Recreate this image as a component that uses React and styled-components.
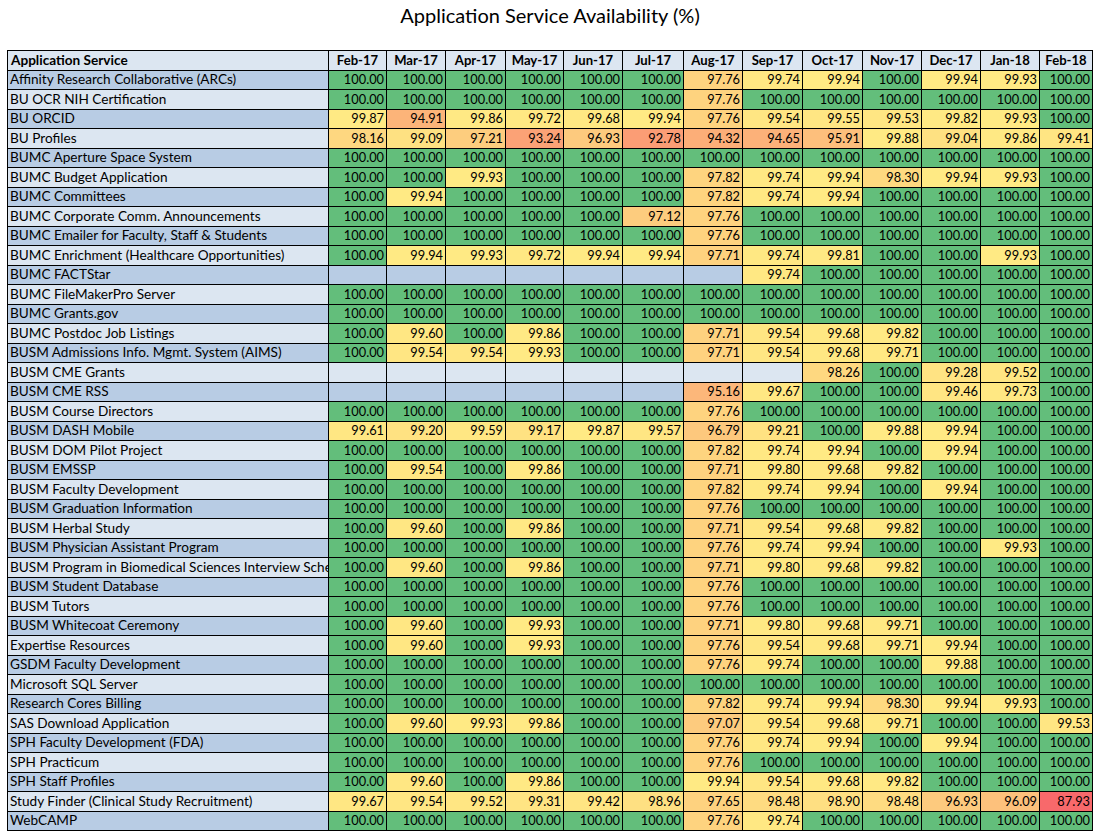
import React from "react";
import styled, { createGlobalStyle } from "styled-components";

const MONTHS = [
  "Feb-17", "Mar-17", "Apr-17", "May-17", "Jun-17", "Jul-17", "Aug-17",
  "Sep-17", "Oct-17", "Nov-17", "Dec-17", "Jan-18", "Feb-18",
];
const COL_WIDTHS = [58, 59, 60, 58, 59, 61, 59, 60, 60, 59, 59, 59, 53];

const H = "100.00";
const ROWS = [
  ["Affinity Research Collaborative (ARCs)", [H, H, H, H, H, H, "97.76", "99.74", "99.94", H, "99.94", "99.93", H]],
  ["BU OCR NIH Certification", [H, H, H, H, H, H, "97.76", H, H, H, H, H, H]],
  ["BU ORCID", ["99.87", "94.91", "99.86", "99.72", "99.68", "99.94", "97.76", "99.54", "99.55", "99.53", "99.82", "99.93", H]],
  ["BU Profiles", ["98.16", "99.09", "97.21", "93.24", "96.93", "92.78", "94.32", "94.65", "95.91", "99.88", "99.04", "99.86", "99.41"]],
  ["BUMC Aperture Space System", [H, H, H, H, H, H, H, H, H, H, H, H, H]],
  ["BUMC Budget Application", [H, H, "99.93", H, H, H, "97.82", "99.74", "99.94", "98.30", "99.94", "99.93", H]],
  ["BUMC Committees", [H, "99.94", H, H, H, H, "97.82", "99.74", "99.94", H, H, H, H]],
  ["BUMC Corporate Comm. Announcements", [H, H, H, H, H, "97.12", "97.76", H, H, H, H, H, H]],
  ["BUMC Emailer for Faculty, Staff & Students", [H, H, H, H, H, H, "97.76", H, H, H, H, H, H]],
  ["BUMC Enrichment (Healthcare Opportunities)", [H, "99.94", "99.93", "99.72", "99.94", "99.94", "97.71", "99.74", "99.81", H, H, "99.93", H]],
  ["BUMC FACTStar", ["", "", "", "", "", "", "", "99.74", H, H, H, H, H]],
  ["BUMC FileMakerPro Server", [H, H, H, H, H, H, H, H, H, H, H, H, H]],
  ["BUMC Grants.gov", [H, H, H, H, H, H, H, H, H, H, H, H, H]],
  ["BUMC Postdoc Job Listings", [H, "99.60", H, "99.86", H, H, "97.71", "99.54", "99.68", "99.82", H, H, H]],
  ["BUSM Admissions Info. Mgmt. System (AIMS)", [H, "99.54", "99.54", "99.93", H, H, "97.71", "99.54", "99.68", "99.71", H, H, H]],
  ["BUSM CME Grants", ["", "", "", "", "", "", "", "", "98.26", H, "99.28", "99.52", H]],
  ["BUSM CME RSS", ["", "", "", "", "", "", "95.16", "99.67", H, H, "99.46", "99.73", H]],
  ["BUSM Course Directors", [H, H, H, H, H, H, "97.76", H, H, H, H, H, H]],
  ["BUSM DASH Mobile", ["99.61", "99.20", "99.59", "99.17", "99.87", "99.57", "96.79", "99.21", H, "99.88", "99.94", H, H]],
  ["BUSM DOM Pilot Project", [H, H, H, H, H, H, "97.82", "99.74", "99.94", H, "99.94", H, H]],
  ["BUSM EMSSP", [H, "99.54", H, "99.86", H, H, "97.71", "99.80", "99.68", "99.82", H, H, H]],
  ["BUSM Faculty Development", [H, H, H, H, H, H, "97.82", "99.74", "99.94", H, "99.94", H, H]],
  ["BUSM Graduation Information", [H, H, H, H, H, H, "97.76", H, H, H, H, H, H]],
  ["BUSM Herbal Study", [H, "99.60", H, "99.86", H, H, "97.71", "99.54", "99.68", "99.82", H, H, H]],
  ["BUSM Physician Assistant Program", [H, H, H, H, H, H, "97.76", "99.74", "99.94", H, H, "99.93", H]],
  ["BUSM Program in Biomedical Sciences Interview Schedule", [H, "99.60", H, "99.86", H, H, "97.71", "99.80", "99.68", "99.82", H, H, H]],
  ["BUSM Student Database", [H, H, H, H, H, H, "97.76", H, H, H, H, H, H]],
  ["BUSM Tutors", [H, H, H, H, H, H, "97.76", H, H, H, H, H, H]],
  ["BUSM Whitecoat Ceremony", [H, "99.60", H, "99.93", H, H, "97.71", "99.80", "99.68", "99.71", H, H, H]],
  ["Expertise Resources", [H, "99.60", H, "99.93", H, H, "97.76", "99.54", "99.68", "99.71", "99.94", H, H]],
  ["GSDM Faculty Development", [H, H, H, H, H, H, "97.76", "99.74", H, H, "99.88", H, H]],
  ["Microsoft SQL Server", [H, H, H, H, H, H, H, H, H, H, H, H, H]],
  ["Research Cores Billing", [H, H, H, H, H, H, "97.82", "99.74", "99.94", "98.30", "99.94", "99.93", H]],
  ["SAS Download Application", [H, "99.60", "99.93", "99.86", H, H, "97.07", "99.54", "99.68", "99.71", H, H, "99.53"]],
  ["SPH Faculty Development (FDA)", [H, H, H, H, H, H, "97.76", "99.74", "99.94", H, "99.94", H, H]],
  ["SPH Practicum", [H, H, H, H, H, H, "97.76", H, H, H, H, H, H]],
  ["SPH Staff Profiles", [H, "99.60", H, "99.86", H, H, "99.94", "99.54", "99.68", "99.82", H, H, H]],
  ["Study Finder (Clinical Study Recruitment)", ["99.67", "99.54", "99.52", "99.31", "99.42", "98.96", "97.65", "98.48", "98.90", "98.48", "96.93", "96.09", "87.93"]],
  ["WebCAMP", [H, H, H, H, H, H, "97.76", "99.74", H, H, H, H, H]],
];

// excel style 3 colour scale: red (min) -> yellow -> green (100)
const MIN = 87.93;
function scaleColor(text) {
  const v = parseFloat(text);
  if (v >= 100) return "#63be7b";
  const t = Math.max(0, Math.min(1, (v - MIN) / (100 - MIN)));
  const r = Math.round(248 + (255 - 248) * t);
  const g = Math.round(105 + (235 - 105) * t);
  const b = Math.round(107 + (132 - 107) * t);
  return `rgb(${r}, ${g}, ${b})`;
}

const GlobalStyle = createGlobalStyle`
  body {
    margin: 0;
    background: #ffffff;
    color: #000000;
    font-family: Lato, "Liberation Sans", sans-serif;
  }
`;

const Page = styled.div`
  width: 1100px;
  height: 838px;
  overflow: hidden;
`;

const Title = styled.h1`
  margin: 0;
  height: 50px;
  padding-top: 1px;
  box-sizing: border-box;
  text-align: center;
  font-size: 20px;
  line-height: 28px;
  font-weight: 400;
`;

const Sheet = styled.table`
  margin-left: 7px;
  width: 1085px;
  border-collapse: collapse;
  table-layout: fixed;
`;

const Row = styled.tr`
  height: 19.5px;
`;

const HeadCell = styled.th`
  background: #dce6f1;
  border: 1px solid #000;
  padding: 0 3px;
  font-size: ${(p) => (p.$left ? "13.6px" : "13.1px")};
  font-weight: 700;
  line-height: 17px;
  text-align: ${(p) => (p.$left ? "left" : "center")};
  white-space: nowrap;
  overflow: hidden;
`;

const NameCell = styled.td`
  background: ${(p) => (p.$dark ? "#b8cce4" : "#dce6f1")};
  border: 1px solid #000;
  padding: 0 2px;
  font-size: 13.6px;
  line-height: 17px;
  white-space: nowrap;
  overflow: hidden;
`;

const ValueCell = styled.td`
  background: ${(p) => p.$fill};
  border: 1px solid #000;
  padding: 0 2px 0 0;
  font-size: 12.8px;
  line-height: 17px;
  text-align: right;
  white-space: nowrap;
  overflow: hidden;
`;

function App() {
  return (
    <Page>
      <GlobalStyle />
      <Title>Application Service Availability (%)</Title>
      <Sheet>
        <colgroup>
          <col style={{ width: 321 }} />
          {COL_WIDTHS.map((w, i) => (
            <col key={i} style={{ width: w }} />
          ))}
        </colgroup>
        <thead>
          <Row>
            <HeadCell $left>Application Service</HeadCell>
            {MONTHS.map((m) => (
              <HeadCell key={m}>{m}</HeadCell>
            ))}
          </Row>
        </thead>
        <tbody>
          {ROWS.map(([name, values], i) => {
            const dark = i % 2 === 0;
            const tint = dark ? "#b8cce4" : "#dce6f1";
            return (
              <Row key={name}>
                <NameCell $dark={dark}>{name}</NameCell>
                {values.map((v, j) => (
                  <ValueCell key={j} $fill={v ? scaleColor(v) : tint}>
                    {v}
                  </ValueCell>
                ))}
              </Row>
            );
          })}
        </tbody>
      </Sheet>
    </Page>
  );
}

export default App;
